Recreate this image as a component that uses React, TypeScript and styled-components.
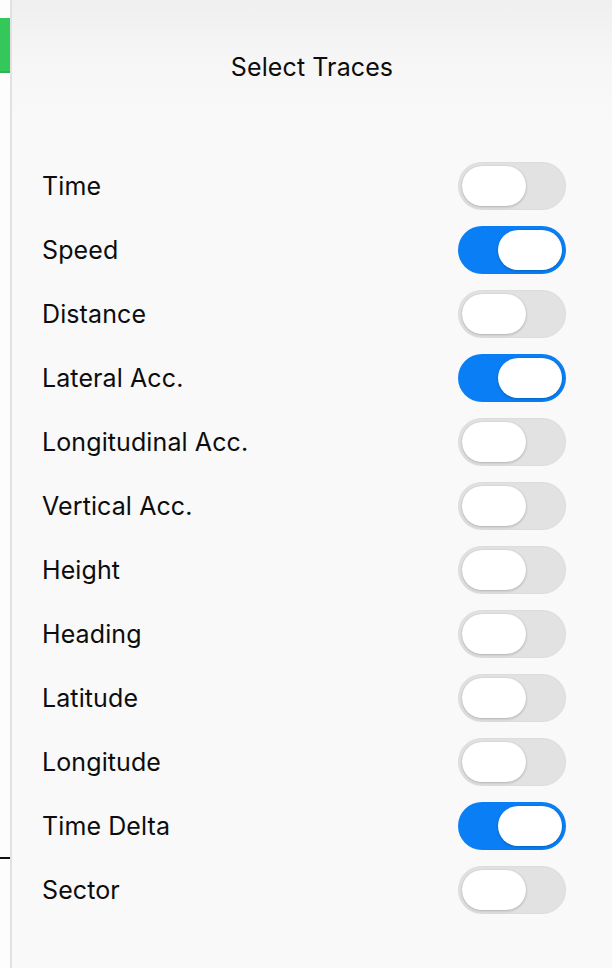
import React, { useState } from 'react';
import styled, { createGlobalStyle } from 'styled-components';

const GlobalStyle = createGlobalStyle`
  html, body {
    margin: 0;
    padding: 0;
    background: #ffffff;
  }
  body {
    font-family: Inter, "Noto Sans", "Liberation Sans", sans-serif;
  }
`;

const TRACES = [
  { name: 'Time', on: false },
  { name: 'Speed', on: true },
  { name: 'Distance', on: false },
  { name: 'Lateral Acc.', on: true },
  { name: 'Longitudinal Acc.', on: false },
  { name: 'Vertical Acc.', on: false },
  { name: 'Height', on: false },
  { name: 'Heading', on: false },
  { name: 'Latitude', on: false },
  { name: 'Longitude', on: false },
  { name: 'Time Delta', on: true },
  { name: 'Sector', on: false },
];

const App = () => {
  const [traces, setTraces] = useState(TRACES);

  // 토글 핸들러
  const toggle = (idx: number) => {
    setTraces(prev => prev.map((t, i) => (i === idx ? { ...t, on: !t.on } : t)));
  };

  return (
    <Wrap>
      <GlobalStyle />
      <BackPane>
        <GreenTab />
        <Spacer />
        <Tick />
      </BackPane>
      <Divider />
      <Sheet>
        <Title>Select Traces</Title>
        <List>
          {traces.map((t, i) => (
            <Row key={t.name}>
              <Label>{t.name}</Label>
              <Track $on={t.on} onClick={() => toggle(i)} aria-label={t.name}>
                <Knob $on={t.on} />
              </Track>
            </Row>
          ))}
        </List>
      </Sheet>
    </Wrap>
  );
};

export default App;

const Wrap = styled.div`
  width: 612px;
  height: 968px;
  display: flex;
  flex-direction: row;
  overflow: hidden;
`;

//뒤쪽 패널
const BackPane = styled.div`
  width: 10px;
  display: flex;
  flex-direction: column;
  background: #fdfdfd;
`;
const GreenTab = styled.div`
  margin-top: 18px;
  height: 53px;
  background: #34c759;
  border-bottom: 2px solid #2fb350;
`;
const Spacer = styled.div`
  flex: 1;
  max-height: 784px;
`;
const Tick = styled.div`
  height: 2px;
  background: #111111;
`;
const Divider = styled.div`
  width: 2px;
  background: #e1e1e1;
`;

//시트
const Sheet = styled.div`
  flex: 1;
  display: flex;
  flex-direction: column;
  background: linear-gradient(180deg, #efefef 0px, #f6f6f6 60px, #f9f9f9 120px, #f9f9f9 100%);
`;
const Title = styled.div`
  margin-top: 52px;
  height: 30px;
  line-height: 30px;
  text-align: center;
  font-size: 25px;
  font-weight: 400;
  letter-spacing: 0.1px;
  color: #0d0d0d;
`;
const List = styled.div`
  margin-top: 72px;
  display: flex;
  flex-direction: column;
`;
const Row = styled.div`
  height: 64px;
  display: flex;
  align-items: center;
  justify-content: space-between;
  padding: 0 46px 0 30px;
`;
const Label = styled.span`
  font-size: 25px;
  color: #0d0d0d;
  letter-spacing: 0.1px;
`;
const Track = styled.button<{ $on: boolean }>`
  position: relative;
  width: 108px;
  height: 48px;
  border: none;
  padding: 0;
  border-radius: 24px;
  background: ${p => (p.$on ? '#0a7ff5' : '#e2e2e2')};
  box-shadow: ${p => (p.$on ? 'none' : 'inset 0 0 2px rgba(0, 0, 0, 0.08)')};
  cursor: pointer;
`;
const Knob = styled.span<{ $on: boolean }>`
  position: absolute;
  top: 4px;
  left: ${p => (p.$on ? '40px' : '4px')};
  width: 64px;
  height: 40px;
  border-radius: 20px;
  background: #ffffff;
  box-shadow: 0 1px 3px rgba(0, 0, 0, 0.22), 0 0 1px rgba(0, 0, 0, 0.12);
`;
